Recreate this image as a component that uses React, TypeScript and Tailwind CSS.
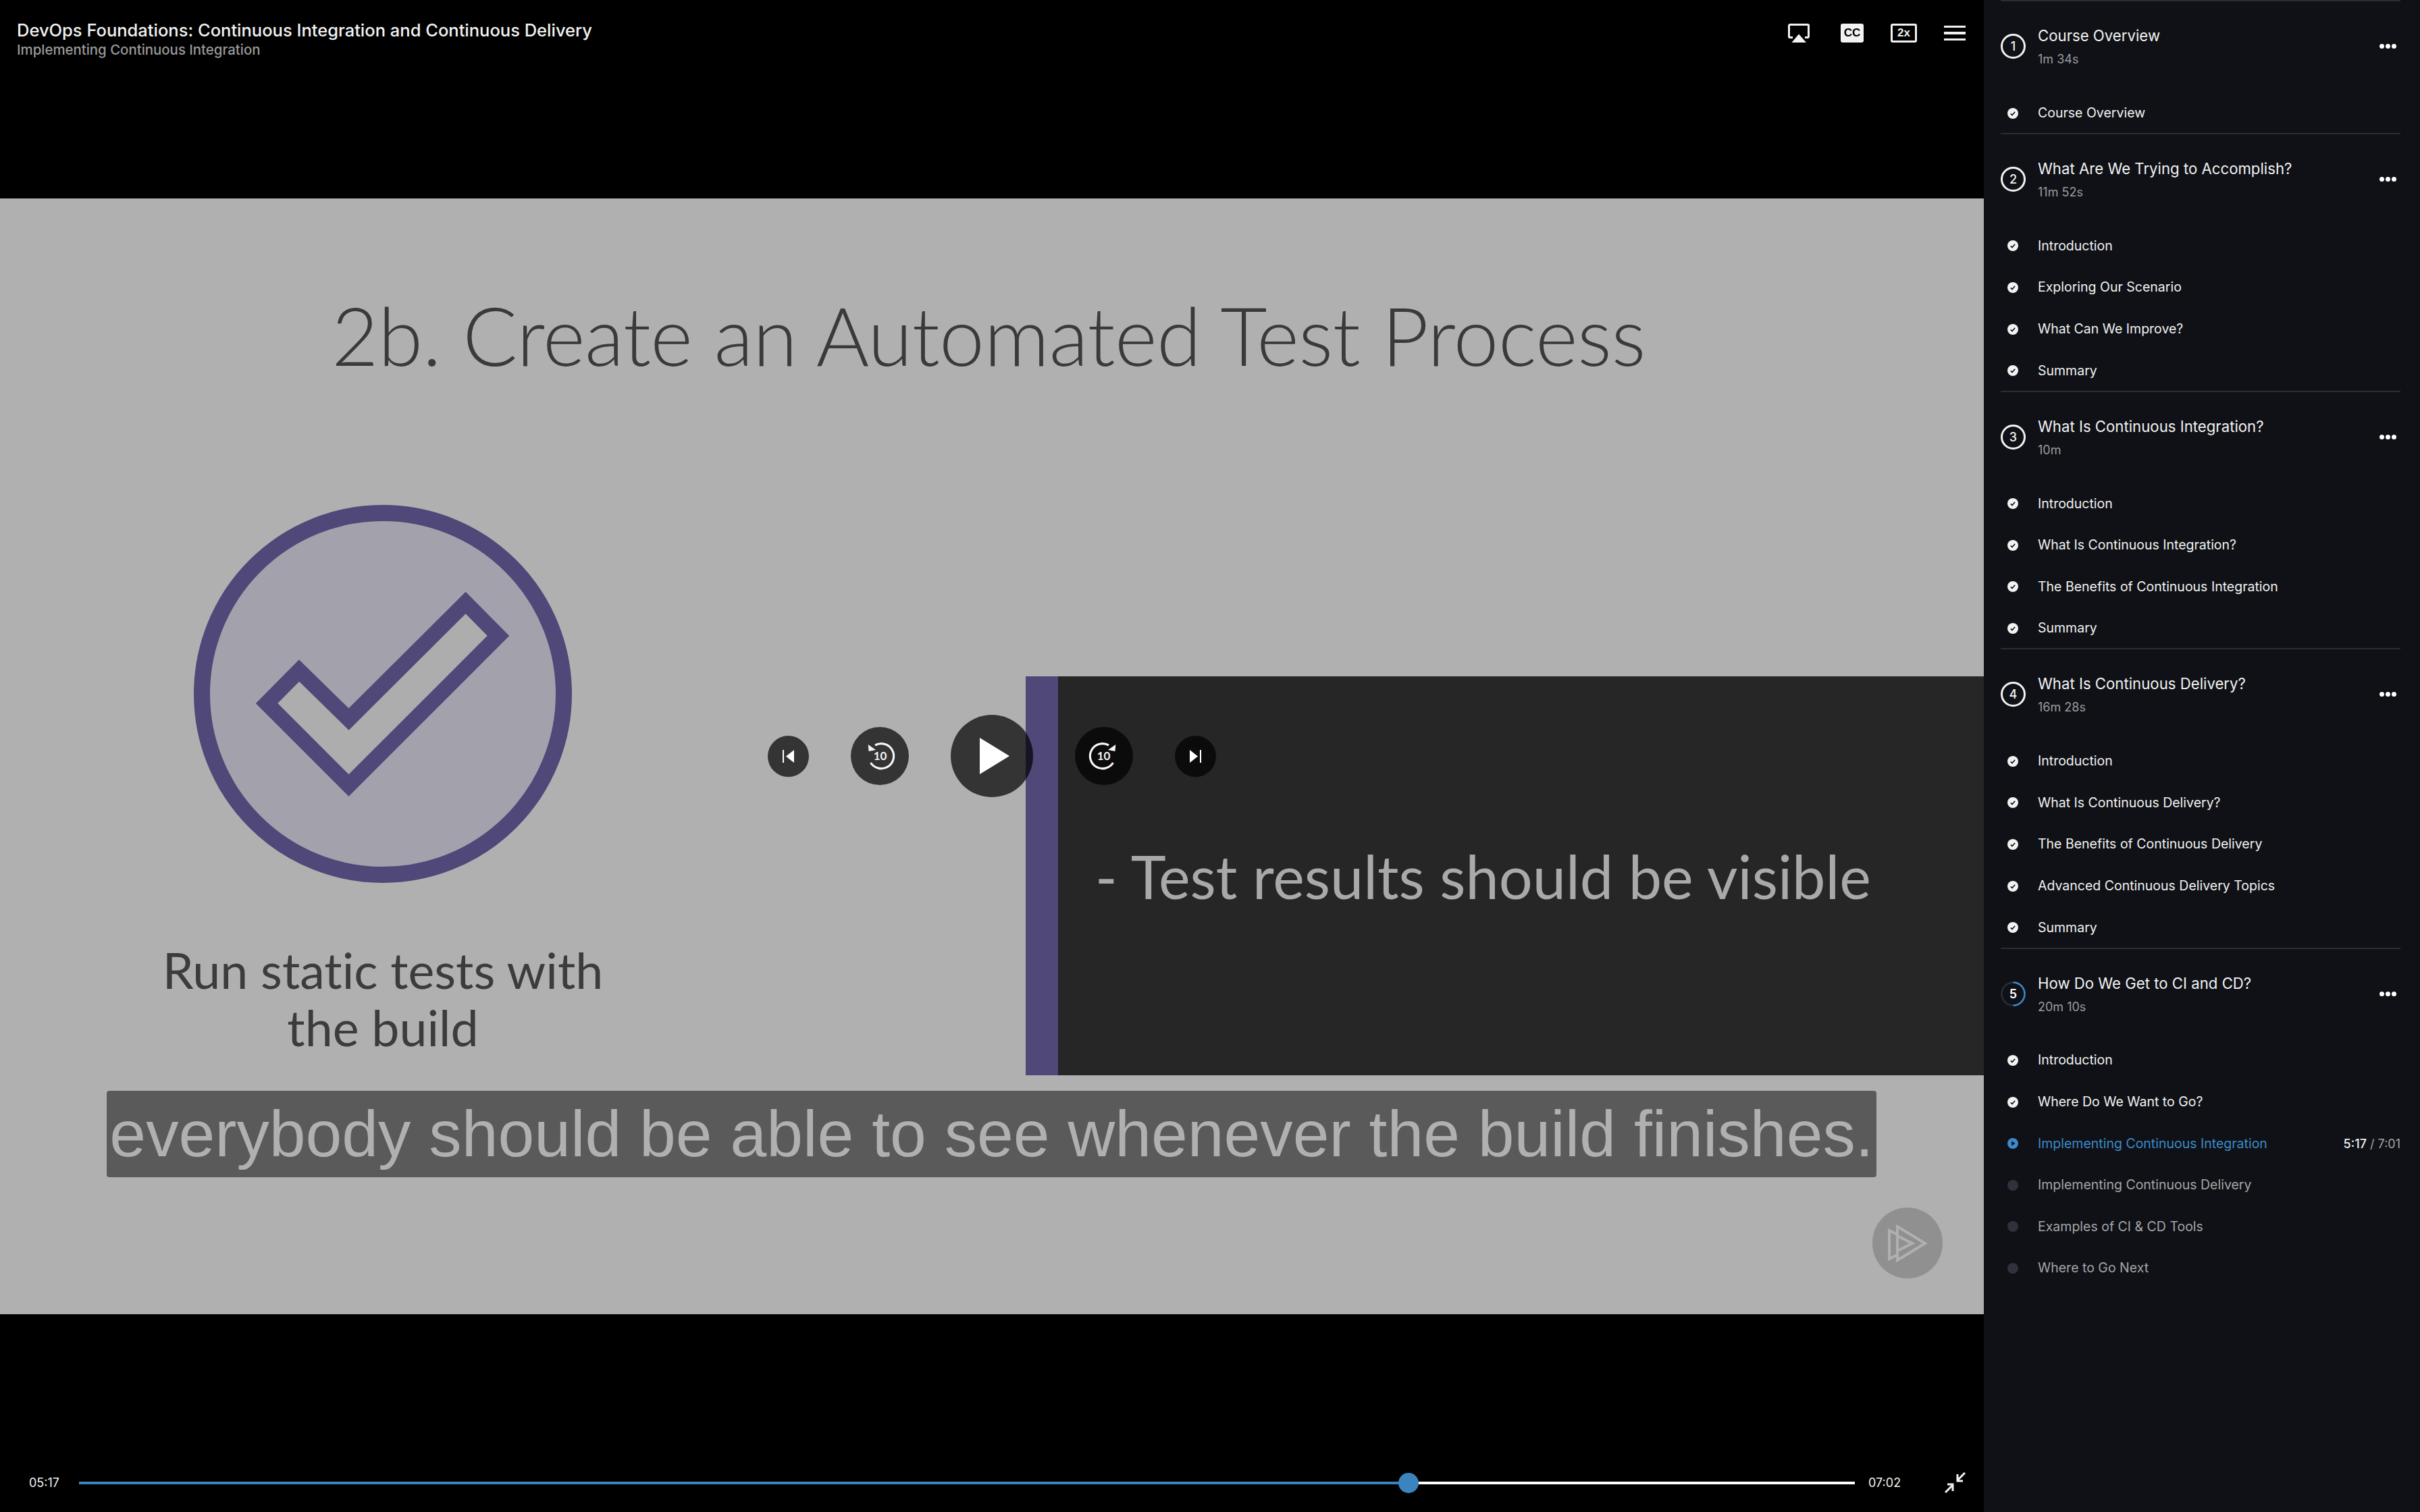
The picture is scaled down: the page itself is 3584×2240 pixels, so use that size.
const sections = [
  { n: "1", title: "Course Overview", time: "1m 34s", items: ["Course Overview"] },
  {
    n: "2",
    title: "What Are We Trying to Accomplish?",
    time: "11m 52s",
    items: ["Introduction", "Exploring Our Scenario", "What Can We Improve?", "Summary"],
  },
  {
    n: "3",
    title: "What Is Continuous Integration?",
    time: "10m",
    items: ["Introduction", "What Is Continuous Integration?", "The Benefits of Continuous Integration", "Summary"],
  },
  {
    n: "4",
    title: "What Is Continuous Delivery?",
    time: "16m 28s",
    items: [
      "Introduction",
      "What Is Continuous Delivery?",
      "The Benefits of Continuous Delivery",
      "Advanced Continuous Delivery Topics",
      "Summary",
    ],
  },
];

const lastItems = [
  { label: "Introduction", state: "done" },
  { label: "Where Do We Want to Go?", state: "done" },
  { label: "Implementing Continuous Integration", state: "active" },
  { label: "Implementing Continuous Delivery", state: "todo" },
  { label: "Examples of CI & CD Tools", state: "todo" },
  { label: "Where to Go Next", state: "todo" },
];

function Dots() {
  return (
    <div className="flex gap-[2px] mr-[16px]">
      <span className="w-[7px] h-[7px] rounded-full bg-white" />
      <span className="w-[7px] h-[7px] rounded-full bg-white" />
      <span className="w-[7px] h-[7px] rounded-full bg-white" />
    </div>
  );
}

function StatusIcon({ state }: { state: string }) {
  if (state === "done") {
    return (
      <svg width="16" height="16" viewBox="0 0 16 16" className="shrink-0">
        <circle cx="8" cy="8" r="8" fill="#f2f2f2" />
        <path d="M4.8 8.4 7 10.5 11.2 5.8" fill="none" stroke="#0f1116" strokeWidth="1.6" />
      </svg>
    );
  }
  if (state === "active") {
    return (
      <svg width="16" height="16" viewBox="0 0 16 16" className="shrink-0">
        <circle cx="8" cy="8" r="8" fill="#3b8ac9" />
        <path d="M6.2 4.4 11.4 8 6.2 11.6Z" fill="#0f1116" />
      </svg>
    );
  }
  return <span className="w-4 h-4 rounded-full bg-[#2e323c] shrink-0" />;
}

function Row({ label, state = "done" }: { label: string; state?: string }) {
  const color =
    state === "active" ? "text-[#3b8ac9]" : state === "todo" ? "text-[#a3a5a9]" : "text-[#f2f2f2]";
  return (
    <div className="flex items-center h-[61.6px] pt-[3px] pl-[35px] pr-[29px]">
      <StatusIcon state={state} />
      <span className={`ml-[29px] text-[19.5px] ${color}`}>{label}</span>
      {state === "active" && (
        <span className="ml-auto text-[18px] text-[#a3a5a9]">
          <span className="text-[#f2f2f2] font-medium">5:17</span> / 7:01
        </span>
      )}
    </div>
  );
}

function SectionHead({ n, title, time, ring }: { n: string; title: string; time: string; ring?: boolean }) {
  return (
    <div className="flex items-center h-[133.3px] pl-[25px] pr-[19px]">
      {ring ? (
        <div className="relative w-[37px] h-[37px] flex items-center justify-center shrink-0">
          <svg width="37" height="37" viewBox="0 0 37 37" className="absolute inset-0">
            <circle cx="18.5" cy="18.5" r="17" fill="none" stroke="#2a2d35" strokeWidth="2.5" />
            <path d="M18.5 1.5 A17 17 0 0 1 18.5 35.5 " fill="none" stroke="#3b8ac9" strokeWidth="2.5" />
          </svg>
          <span className="text-[18px] font-semibold text-white">{n}</span>
        </div>
      ) : (
        <div className="w-[37px] h-[37px] rounded-full border-[3px] border-[#f2f2f2] flex items-center justify-center text-[18px] font-medium text-[#f2f2f2] shrink-0">
          {n}
        </div>
      )}
      <div className="ml-[18px] pt-[2px] flex flex-col gap-[11px]">
        <span className="text-[22.2px] leading-[26px] text-[#f2f2f2]">{title}</span>
        <span className="text-[18px] leading-[22px] text-[#9a9ca0]">{time}</span>
      </div>
      <div className="ml-auto">
        <Dots />
      </div>
    </div>
  );
}

function Sidebar() {
  return (
    <aside className="w-[646px] h-[2240px] bg-[#0f1116] shrink-0 overflow-hidden">
      {sections.map((s) => (
        <section key={s.n}>
          <div className="h-[2px] ml-[25px] mr-[29px] bg-[#2a2d35]" />
          <SectionHead n={s.n} title={s.title} time={s.time} />
          {s.items.map((item) => (
            <Row key={item} label={item} />
          ))}
        </section>
      ))}
      <section>
        <div className="h-[2px] ml-[25px] mr-[29px] bg-[#2a2d35]" />
        <SectionHead n="5" title="How Do We Get to CI and CD?" time="20m 10s" ring />
        {lastItems.map((item) => (
          <Row key={item.label} label={item.label} state={item.state} />
        ))}
      </section>
    </aside>
  );
}

function SkipIcon({ flip }: { flip?: boolean }) {
  return (
    <svg width="17" height="19" viewBox="0 0 17 19" className={flip ? "-scale-x-100" : ""}>
      <rect x="0" y="0" width="2" height="19" fill="#fff" />
      <path d="M17 0V19L5 9.500Z" fill="#fff" />
    </svg>
  );
}

function SeekIcon({ forward }: { forward?: boolean }) {
  return (
    <svg width="86" height="86" viewBox="0 0 86 86" className={forward ? "-scale-x-100" : ""}>
      <path d="M36 27 A18.500 18.500 0 1 1 29.500 53" fill="none" stroke="#f5f5f5" strokeWidth="3.2" />
      <path d="M25.700 26 L37 34 L26.600 36Z" fill="#f5f5f5" />
    </svg>
  );
}

function Controls() {
  const dark = "rounded-full bg-black/70 flex items-center justify-center shrink-0";
  return (
    <div className="absolute inset-0 flex items-center justify-center gap-[62px]">
      <button className={`${dark} w-[61px] h-[61px]`}>
        <SkipIcon />
      </button>
      <button className={`${dark} relative w-[86px] h-[86px]`}>
        <SeekIcon />
        <span className="absolute inset-0 pl-[1px] flex items-center justify-center text-[17px] font-bold text-[#f5f5f5] font-['Lato',sans-serif]">
          10
        </span>
      </button>
      <button className={`${dark} w-[122px] h-[122px]`}>
        <svg width="44" height="54" viewBox="0 0 44 54" className="ml-[8px]">
          <path d="M0 0 44 27 0 54Z" fill="#fff" />
        </svg>
      </button>
      <button className={`${dark} relative w-[86px] h-[86px]`}>
        <SeekIcon forward />
        <span className="absolute inset-0 pr-[1px] flex items-center justify-center text-[17px] font-bold text-[#f5f5f5] font-['Lato',sans-serif]">
          10
        </span>
      </button>
      <button className={`${dark} w-[61px] h-[61px]`}>
        <SkipIcon flip />
      </button>
    </div>
  );
}

function Slide() {
  return (
    <div className="relative h-[1653px] bg-[#b0b0b0] overflow-hidden font-['Lato',sans-serif] [font-variant-ligatures:none]">
      <div className="h-[454px] pl-[491px] pt-[132px]">
        <h1 className="text-[120px] tracking-[-0.5px] leading-[140px] font-light text-[#3a3a3a] whitespace-nowrap">
          2b. Create an Automated Test Process
        </h1>
      </div>
      <div className="flex">
        <div className="w-[1134px] flex flex-col items-center shrink-0">
          <svg width="560" height="560" viewBox="0 0 560 560">
            <circle cx="280" cy="280" r="268" fill="#a3a1ab" stroke="#4f4878" strokeWidth="24" />
            <path
              d="M108 294 156 245.500 229.500 317.500 402.600 145 451 194 229.500 415.500Z"
              fill="#adadad"
              stroke="#4f4878"
              strokeWidth="23"
            />
          </svg>
          <p className="mt-[86px] text-[73.500px] leading-[85px] text-[#3c3c3c] text-center whitespace-nowrap">
            Run static tests with
            <br />
            the build
          </p>
        </div>
        <div className="ml-[385px] mt-[254px] flex-1 h-[591px] bg-[#262626] border-l-[48px] border-[#4f4878] pl-[55px] pt-[236px]">
          <p className="text-[88.200px] leading-[120px] text-[#a9a9a9] whitespace-nowrap">- Test results should be visible</p>
        </div>
      </div>
      <div className="absolute left-[158px] top-[1322px] w-[2621px] h-[128px] rounded-[4px] bg-[#5a5a5a] flex items-center justify-center">
        <span className="text-[96.700px] text-[#b0b0b0] whitespace-nowrap font-['Liberation_Sans',sans-serif]">
          everybody should be able to see whenever the build finishes.
        </span>
      </div>
      <div className="absolute left-[2773px] top-[1495px] w-[104px] h-[105px] rounded-full bg-[#909090] flex items-center justify-center">
        <svg width="60" height="56" viewBox="0 0 60 56" fill="none" stroke="#b0b0b0" strokeWidth="4">
          <path d="M15 3 56 28 15 53Z" />
          <path d="M15 33V45L3 51V9L15 15" />
          <path d="M15 17 37 28 15 39" />
        </svg>
      </div>
    </div>
  );
}

export default function App() {
  return (
    <div className="relative w-[3584px] h-[2240px] flex bg-black overflow-hidden font-['Inter',sans-serif]">
      <main className="relative w-[2938px] shrink-0">
        <header className="h-[294px] flex items-start justify-between pl-[25px] pr-[27px] pt-[30px]">
          <div>
            <div className="text-[25.500px] leading-[30px] font-medium text-[#f2f2f2]">
              DevOps Foundations: Continuous Integration and Continuous Delivery
            </div>
            <div className="text-[20.400px] leading-[28px] font-medium text-[#9a9a9a]">Implementing Continuous Integration</div>
          </div>
          <div className="flex items-center gap-[40px] pt-[5px]">
            <svg width="32" height="28" viewBox="0 0 32 28" className="mr-[6px]">
              <path d="M7 20.500H3A1.500 1.500 0 0 1 1.500 19V3A1.500 1.500 0 0 1 3 1.500H29A1.500 1.500 0 0 1 30.500 3V19A1.500 1.500 0 0 1 29 20.500H25" fill="none" stroke="#f2f2f2" strokeWidth="3" />
              <path d="M16 15.500 27 28H5.500Z" fill="#f2f2f2" />
            </svg>
            <div className="w-[34px] h-[28px] rounded-[3px] bg-[#f2f2f2] flex items-center justify-center text-[17px] font-bold text-black font-['Liberation_Sans',sans-serif]">
              CC
            </div>
            <div className="w-[39px] h-[28px] rounded-[3px] border-[3px] border-[#f2f2f2] flex items-center justify-center text-[17px] font-bold text-[#f2f2f2] font-['Liberation_Sans',sans-serif]">
              2x
            </div>
            <div className="w-[32px] flex flex-col gap-[6px]">
              <span className="h-[3.500px] bg-[#f2f2f2]" />
              <span className="h-[3.500px] bg-[#f2f2f2]" />
              <span className="h-[3.500px] bg-[#f2f2f2]" />
            </div>
          </div>
        </header>
        <Slide />
        <footer className="h-[293px] flex items-end pb-[28px] pl-[43px] pr-[27px]">
          <div className="flex items-center w-full h-[31px]">
            <span className="w-[74px] text-[18px] text-[#f2f2f2]">05:17</span>
            <div className="relative w-[2630px] h-[4px] bg-white shrink-0">
              <div className="h-full w-[1969px] bg-[#3b84bd]" />
              <span className="absolute left-[1954px] top-[-13px] w-[30px] h-[30px] rounded-full bg-[#3b84bd]" />
            </div>
            <span className="ml-[20px] text-[18px] text-[#f2f2f2]">07:02</span>
            <svg width="31" height="31" viewBox="0 0 31 31" className="ml-auto" fill="none" stroke="#f2f2f2" strokeWidth="3">
              <path d="M30 1 19 12" />
              <path d="M19 3V13H27" />
              <path d="M1 30 12 19" />
              <path d="M12 28V18H4" />
            </svg>
          </div>
        </footer>
        <Controls />
      </main>
      <Sidebar />
    </div>
  );
}
